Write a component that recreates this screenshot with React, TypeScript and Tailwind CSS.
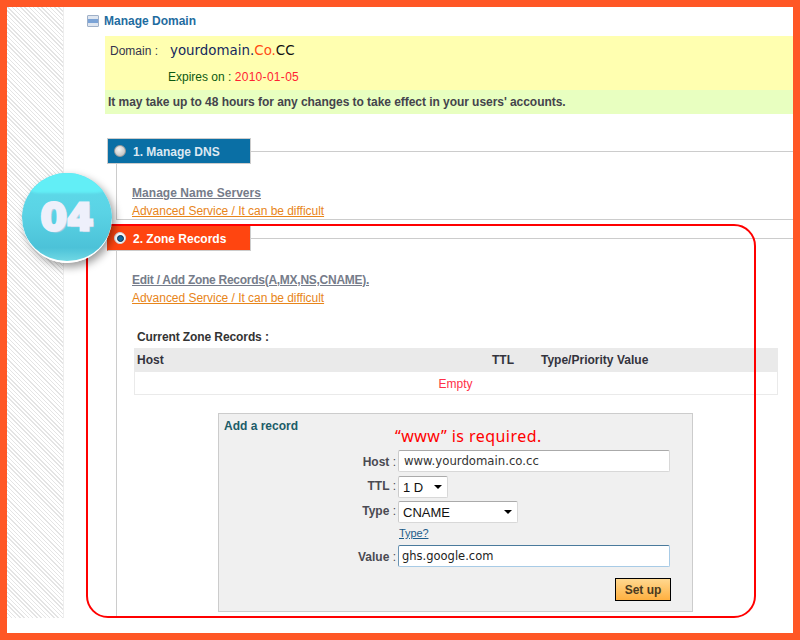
import type { ReactNode } from 'react';

const ADVANCED = 'Advanced Service / It can be difficult';

function SectionTab({ label, active }: { label: string; active?: boolean }) {
  return (
    <div className="ml-[43px] flex h-[26px] items-center">
      <div
        className={
          active
            ? 'flex h-[26px] w-[144px] shrink-0 items-center border border-[#ff4510] border-r-[#ccc] border-b-[#ccc] bg-[#ff4510] pl-[6px]'
            : 'flex h-[26px] w-[144px] shrink-0 items-center border border-[#ccc] bg-[#0a6fa5] pl-[6px]'
        }
      >
        {active ? (
          <span className="flex h-[12px] w-[12px] items-center justify-center rounded-full border border-[#cfd6dc] bg-white">
            <span className="h-[7px] w-[7px] rounded-full border border-[#0b2f4a] bg-[#12699e]" />
          </span>
        ) : (
          <span className="h-[12px] w-[12px] rounded-full border border-[#9a9a9a] bg-[radial-gradient(circle_at_40%_35%,#f4f4f4,#b5b5b5)]" />
        )}
        <span className={active ? 'ml-[7px] pt-[2px] text-[12px] font-bold text-white' : 'ml-[7px] pt-[2px] text-[12px] font-bold text-[#dce8f2]'}>
          {label}
        </span>
      </div>
      <div className="h-px flex-1 bg-[#ccc]" />
    </div>
  );
}

function SectionLinks({ title, tight }: { title: string; tight?: boolean }) {
  return (
    <>
      <div className={tight ? 'text-[12px] leading-[14px] font-bold tracking-[-0.27px] text-[#767c8a] underline' : 'text-[12px] leading-[14px] font-bold tracking-[0.05px] text-[#767c8a] underline'}>
        {title}
      </div>
      <div className="mt-[4px] text-[12px] leading-[14px] tracking-[-0.03px] text-[#e8851a] underline">{ADVANCED}</div>
    </>
  );
}

function FormRow({ label, children, className, labelClass }: { label: string; children: ReactNode; className: string; labelClass: string }) {
  return (
    <div className={`flex items-center ${className}`}>
      <div className={`w-[179px] pr-[2px] text-right text-[12px] font-bold text-[#4a4a52] ${labelClass}`}>
        {label} <span className="font-normal">:</span>
      </div>
      {children}
    </div>
  );
}

function FakeSelect({ value, width, inset }: { value: string; width: string; inset: string }) {
  return (
    <div className={`flex h-[22px] items-center justify-between rounded-[2px] border border-[#d8d8d8] border-t-[#aaa] border-l-[#ccc] bg-white pr-[5px] pl-[4px] text-[13px] text-[#111] ${width}`}>
      <span className={inset}>{value}</span>
      <span className="h-0 w-0 border-x-[4px] border-t-[4px] border-x-transparent border-t-black" />
    </div>
  );
}

export default function App() {
  return (
    <div className="relative flex h-[640px] w-[800px] overflow-hidden border-[7px] border-[#ff5725] bg-white font-['Liberation_Sans',Arial,sans-serif]">
      {/* striped left gutter */}
      <div className="h-[611px] w-[57px] shrink-0 border-r border-[#eee] bg-[repeating-linear-gradient(45deg,#e4e4e4_0px,#e4e4e4_1px,#ffffff_1px,#ffffff_3px)]" />

      <div className="min-w-0 flex-1">
        <div className="ml-[23px] flex h-[29px] items-center pb-[1px]">
          <span className="flex h-[12px] w-[12px] items-center rounded-[1px] border border-[#9fb0c8] bg-[#dfe6f0]">
            <span className="h-[4px] w-full bg-[#7ba3d6]" />
          </span>
          <span className="ml-[5px] text-[12px] font-bold text-[#1f6c9f]">Manage Domain</span>
        </div>

        <div className="ml-[41px]">
          <div className="h-[54px] bg-[#ffffb0] pt-[4px]">
            <div className="flex items-center pl-[5px]">
              <span className="w-[55px] text-[12px] text-[#33334d]">Domain :</span>
              <span className="mt-[1px] ml-[5px] font-['DejaVu_Sans',sans-serif] text-[13.4px] text-[#14285e]">
                yourdomain.<span className="text-[#ff4b14]">Co.</span>
                <span className="text-[#111]">CC</span>
              </span>
            </div>
            <div className="mt-[7px] pl-[63px] text-[12px] text-[#0d5a12]">
              Expires on : <span className="tracking-[0.3px] text-[#ff2233]">2010-01-05</span>
            </div>
          </div>
          <div className="flex h-[24px] items-center bg-[#e8ffc0] pl-[3px] text-[12px] font-bold tracking-[-0.05px] text-[#44444c]">
            It may take up to 48 hours for any changes to take effect in your users' accounts.
          </div>
        </div>

        <div className="mt-[24px]">
          <SectionTab label="1. Manage DNS" />
          <div className="ml-[52px] h-[56px] border-b border-l border-[#ccc] pt-[22px] pl-[15px]">
            <SectionLinks title="Manage Name Servers" />
          </div>
        </div>

        <div className="mt-[5px]">
          <SectionTab label="2. Zone Records" active />
          <div className="ml-[52px] h-[366px] border-l border-[#ccc] pl-[15px]">
            <div className="pt-[22px]">
              <SectionLinks title="Edit / Add Zone Records(A,MX,NS,CNAME)." tight />
            </div>

            <div className="mt-[25px] ml-[5px] text-[12px] leading-[14px] font-bold tracking-[-0.1px] text-[#333]">Current Zone Records :</div>
            <div className="mt-[4px] ml-[2px] w-[644px] text-[12px] font-bold text-[#33333d]">
              <div className="grid h-[24px] grid-cols-[355px_49px_76px_1fr] items-center bg-[#eaeaea] pl-[3px]">
                <span>Host</span>
                <span>TTL</span>
                <span>Type/Priority</span>
                <span>Value</span>
              </div>
              <div className="flex h-[23px] items-center justify-center border-x border-b border-[#eaeaea] pt-[1px] pr-[1px] font-normal text-[#ff3048]">Empty</div>
            </div>

            <div className="mt-[18px] ml-[86px] h-[199px] w-[475px] border border-[#ccc] bg-[#f0f0f0]">
              <div className="relative pt-[5px] pl-[5px] text-[12px] leading-[14px] font-bold text-[#1c5c68]">
                Add a record
                <span className="absolute top-[12px] left-[176px] font-['Noto_Sans',sans-serif] text-[16px] leading-[20px] font-normal tracking-[0.45px] text-[#f00]">
                  “www” is required.
                </span>
              </div>
              <FormRow label="Host" className="mt-[17px]" labelClass="pt-[1px]">
                <div className="flex h-[22px] w-[272px] items-center rounded-[2px] border border-[#d8d8d8] border-t-[#aaa] border-l-[#ccc] bg-white pt-[1px] pl-[5px] font-['DejaVu_Sans',sans-serif] text-[11.7px] text-[#333]">
                  www.yourdomain.co.cc
                </div>
              </FormRow>
              <FormRow label="TTL" className="mt-[4px]" labelClass="pb-[3px]">
                <FakeSelect value="1 D" width="w-[50px]" inset="pt-[2px]" />
              </FormRow>
              <FormRow label="Type" className="mt-[3px]" labelClass="pb-[3px]">
                <FakeSelect value="CNAME" width="w-[120px]" inset="pt-[1px]" />
              </FormRow>
              <div className="mt-[4px] ml-[180px] text-[11px] leading-[12px] tracking-[-0.1px] text-[#1c5c8a] underline">Type?</div>
              <FormRow label="Value" className="mt-[6px]" labelClass="pt-[1px]">
                <div className="flex h-[22px] w-[272px] items-center rounded-[2px] border border-[#a8cbe6] border-t-[#4a7a9c] border-l-[#6a94b4] bg-white pt-[2px] pl-[3px] font-['DejaVu_Sans',sans-serif] text-[11.5px] text-[#222]">
                  ghs.google.com
                </div>
              </FormRow>
              <div className="mt-[11px] flex justify-end pr-[21px]">
                <button
                  type="button"
                  className="h-[23px] w-[56px] border border-black bg-[linear-gradient(#ffd890,#ffb040)] text-[12px] font-bold text-[#4a3a20]"
                >
                  Set up
                </button>
              </div>
            </div>
          </div>
        </div>
      </div>

      {/* red callout frame */}
      <div className="pointer-events-none absolute top-[217px] left-[79px] h-[394px] w-[670px] rounded-[22px] border-2 border-[#f00]" />

      {/* step badge */}
      <div className="absolute top-[166px] left-[15px] flex h-[90px] w-[90px] items-center justify-center overflow-hidden rounded-full border-b-2 border-white bg-[linear-gradient(#5fdcea_0%,#5ad3e5_45%,#4cc2d8_85%,#70d8e4_100%)] shadow-[3px_4px_8px_rgba(0,0,0,0.4)]">
        <span className="absolute top-[-24px] left-[-5px] h-[44px] w-[100px] rounded-full bg-[#62eef6] blur-[1px]" />
        <span className="relative font-['DejaVu_Sans',sans-serif] text-[38px] leading-none font-bold text-[#eef0fb] [-webkit-text-stroke:3px_#eef0fb] [text-shadow:2px_2px_1px_#c3cce2]">
          04
        </span>
      </div>
    </div>
  );
}
